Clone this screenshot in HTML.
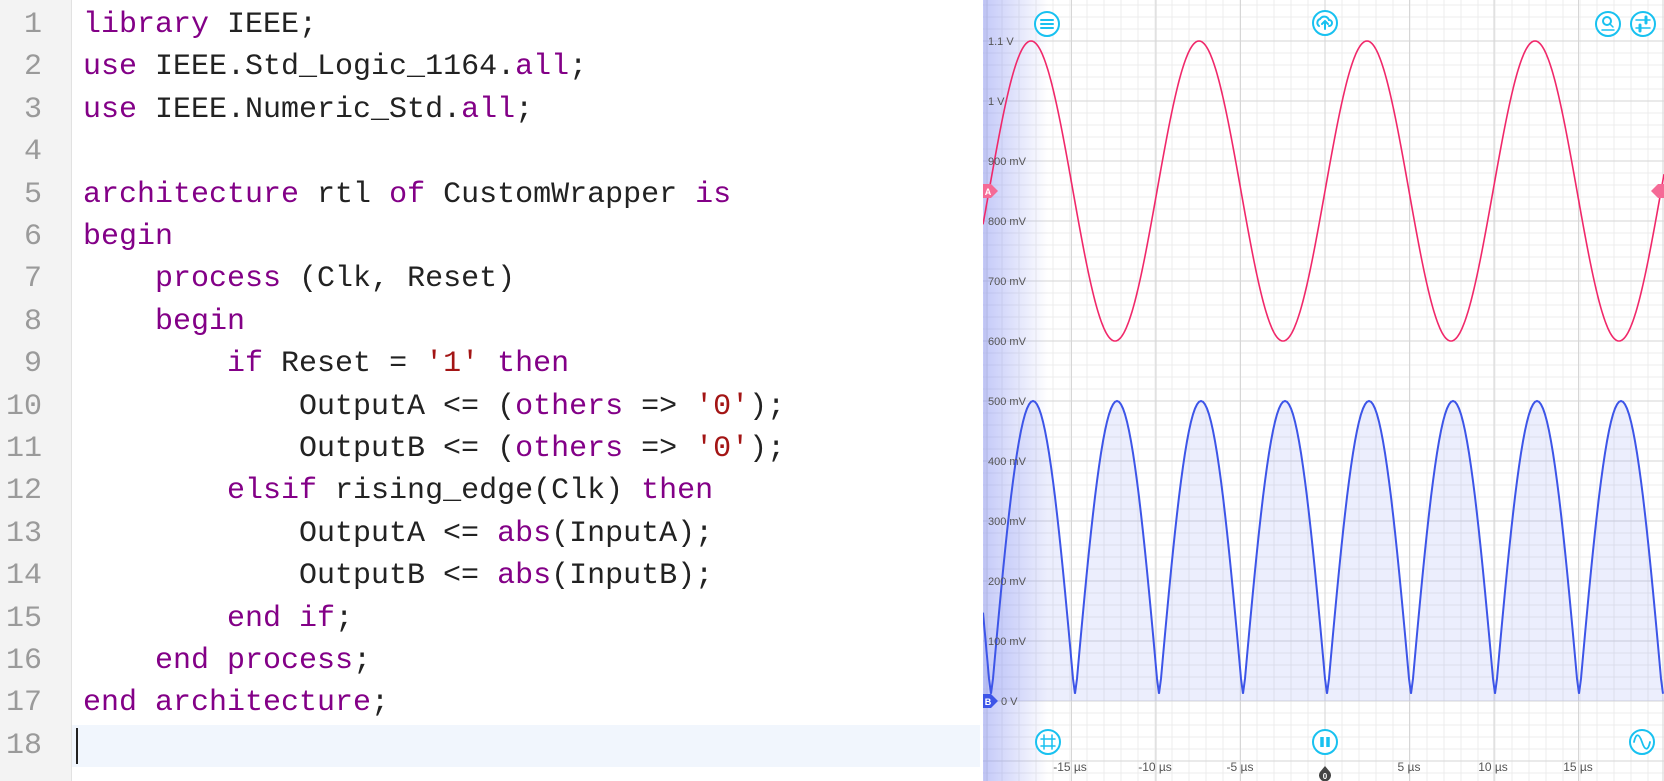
<!DOCTYPE html>
<html><head><meta charset="utf-8"><style>
html,body{margin:0;padding:0;width:1664px;height:781px;overflow:hidden;background:#fff}
#code{position:absolute;left:0;top:0;width:980px;height:781px;background:#fff}
#gut{position:absolute;left:0;top:0;width:71px;height:781px;background:#f3f3f3;border-right:1px solid #e2e2e2}
.ln{position:absolute;left:0;width:42px;text-align:right;color:#9a9a9a;font:30px/42.4px "Liberation Mono",monospace}
.cl{position:absolute;left:83px;white-space:pre;color:#222;font:30px/42.4px "Liberation Mono",monospace}
.k{color:#830087}.s{color:#a31515}
#hl{position:absolute;left:72px;top:725px;width:908px;height:42.4px;background:#f1f6fd}
#cur{position:absolute;left:76px;top:728px;width:2px;height:36px;background:#222}
#scope{position:absolute;left:983px;top:0}
</style></head><body>
<div id="code"><div id="gut"></div><div id="hl"></div><div id="cur"></div><div id="lines"></div></div>
<svg id="scope" width="681" height="781" xmlns="http://www.w3.org/2000/svg">
<defs><linearGradient id="lg" x1="0" x2="1" y1="0" y2="0"><stop offset="0" stop-color="#7a86f0" stop-opacity="0.45"/><stop offset="1" stop-color="#7a86f0" stop-opacity="0"/></linearGradient></defs>
<g id="grid"></g>
<path id="bfill" fill="#6f7cf2" fill-opacity="0.13" stroke="none"/>
<rect x="0" y="0" width="65" height="781" fill="url(#lg)"/>
<path id="red" fill="none" stroke="#f0286a" stroke-width="1.6"/>
<path id="blue" fill="none" stroke="#3d55e8" stroke-width="2"/>
<g id="labels" font-family="Liberation Sans,sans-serif" font-size="11" fill="#555"></g>
<g font-family="Liberation Sans,sans-serif" font-size="12" fill="#555" text-anchor="middle">
<text x="87" y="771">-15 µs</text><text x="172" y="771">-10 µs</text><text x="257" y="771">-5 µs</text>
<text x="426" y="771">5 µs</text><text x="510" y="771">10 µs</text><text x="595" y="771">15 µs</text>
</g>
<path d="M0 184 h8 l7 7 l-7 7 h-8z" fill="#f56a96"/><text x="5" y="195" font-family="Liberation Sans,sans-serif" font-size="9" font-weight="bold" fill="#fff" text-anchor="middle">A</text>
<path d="M681 184 h-6 l-7 7 l7 7 h6z" fill="#f56a96"/>
<path d="M0 694 h8 l7 7 l-7 7 h-8z" fill="#3d55e8"/><text x="5" y="705" font-family="Liberation Sans,sans-serif" font-size="9" font-weight="bold" fill="#fff" text-anchor="middle">B</text>
<path d="M342 766 l5 6 a6 6 0 1 1 -10 0z" fill="#444"/><text x="342" y="779" font-family="Liberation Sans,sans-serif" font-size="8" font-weight="bold" fill="#fff" text-anchor="middle">0</text>
<g fill="#fff" stroke="#18c1f0" stroke-width="2">
<circle cx="64" cy="24" r="12"/><circle cx="342" cy="23" r="12"/><circle cx="625" cy="24" r="12"/><circle cx="660" cy="24" r="12"/>
<circle cx="65" cy="742" r="12"/><circle cx="342" cy="742" r="12"/><circle cx="659" cy="742" r="12"/>
</g>
<g stroke="#18c1f0" stroke-width="2" fill="none" stroke-linecap="round">
<path d="M58 20h12M58 24h12M58 28h12"/>
<path d="M336 26a4 4 0 0 1 1-7a5 5 0 0 1 9 1a3 3 0 0 1 0 6M342 29v-7M339 24l3-3l3 3"/>
<circle cx="624" cy="21" r="4"/><path d="M627 24l3 3M619 30h12" stroke-width="1.5"/>
<path d="M653 20h14M653 28h14" stroke-width="1.5"/><path d="M663 17v6M657 25v6" stroke-width="3"/>
<path d="M61 735v14M69 735v14M58 739h14M58 746h14" stroke-width="1.5"/>
<path d="M339 737v10M345 737v10" stroke-width="3.5" stroke-linecap="butt"/>
<path d="M651 742c2-9 5-9 8 0s6 9 8 0" stroke-width="1.8"/>
</g>
</svg>
<script>
var code=[
'<span class="k">library</span> IEEE;',
'<span class="k">use</span> IEEE.Std_Logic_1164.<span class="k">all</span>;',
'<span class="k">use</span> IEEE.Numeric_Std.<span class="k">all</span>;',
'',
'<span class="k">architecture</span> rtl <span class="k">of</span> CustomWrapper <span class="k">is</span>',
'<span class="k">begin</span>',
'    <span class="k">process</span> (Clk, Reset)',
'    <span class="k">begin</span>',
'        <span class="k">if</span> Reset = <span class="s">\'1\'</span> <span class="k">then</span>',
'            OutputA &lt;= (<span class="k">others</span> =&gt; <span class="s">\'0\'</span>);',
'            OutputB &lt;= (<span class="k">others</span> =&gt; <span class="s">\'0\'</span>);',
'        <span class="k">elsif</span> rising_edge(Clk) <span class="k">then</span>',
'            OutputA &lt;= <span class="k">abs</span>(InputA);',
'            OutputB &lt;= <span class="k">abs</span>(InputB);',
'        <span class="k">end if</span>;',
'    <span class="k">end process</span>;',
'<span class="k">end architecture</span>;',
''];
var h='';for(var i=0;i<18;i++){var t=4+42.4*i;h+='<div class="ln" style="top:'+t+'px">'+(i+1)+'</div><div class="cl" style="top:'+t+'px">'+code[i]+'</div>';}
document.getElementById('lines').innerHTML=h;
var g='';
for(var x=342%17;x<681;x+=17)g+='<line x1="'+x+'" x2="'+x+'" y1="0" y2="781" stroke="#ececec"/>';
for(var y=701%12;y<781;y+=12)g+='<line y1="'+y+'" y2="'+y+'" x1="0" x2="681" stroke="#ececec"/>';
for(var x=342%84.5;x<681;x+=84.5)g+='<line x1="'+x+'" x2="'+x+'" y1="0" y2="781" stroke="#d6d6d6"/>';
for(var y=701%60;y<781;y+=60)g+='<line y1="'+y+'" y2="'+y+'" x1="0" x2="681" stroke="#d6d6d6"/>';
document.getElementById('grid').innerHTML=g;
var r='',b='';
for(var x=0;x<=681;x+=1){var v=0.85+0.25*Math.cos(2*Math.PI*(x+983-1031)/168);r+=(x?'L':'M')+x+' '+(701-v*600).toFixed(1);}
for(var x=0;x<=681;x+=2){var p=Math.abs(Math.sin(Math.PI*(x+983-991)/84));var v=Math.max(0.012,0.5*p);b+=(x?'L':'M')+x+' '+(701-v*600).toFixed(1);}
document.getElementById('red').setAttribute('d',r);
document.getElementById('blue').setAttribute('d',b);
document.getElementById('bfill').setAttribute('d',b+'L681 701L0 701Z');
var L=['1.1 V','1 V','900 mV','800 mV','700 mV','600 mV','500 mV','400 mV','300 mV','200 mV','100 mV'],l='';
for(var i=0;i<11;i++)l+='<text x="5" y="'+(45+60*i)+'">'+L[i]+'</text>';
l+='<text x="18" y="705">0 V</text>';
document.getElementById('labels').innerHTML=l;
</script>
</body></html>
